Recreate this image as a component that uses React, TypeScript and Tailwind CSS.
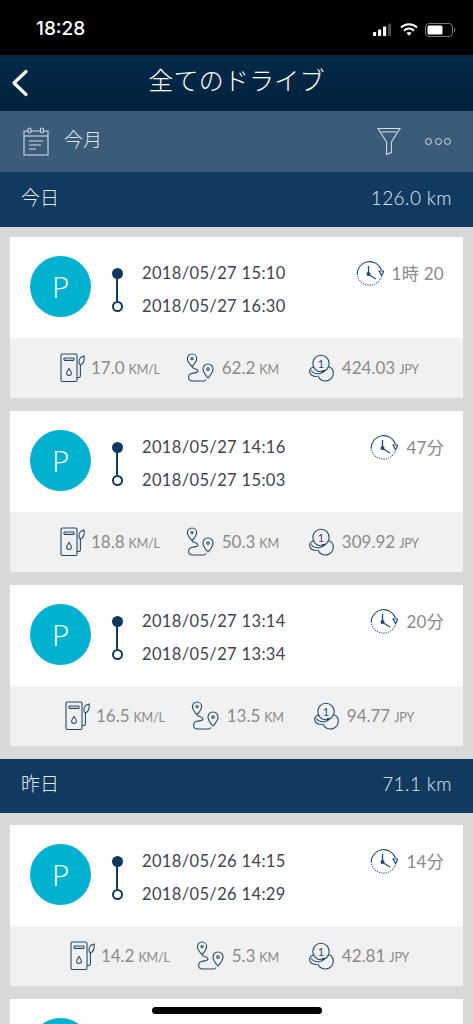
import React from "react";

const NAVY = "#1f4a70";

function Fuel() {
  return (
    <svg width="26" height="30" viewBox="0 0 26 30" fill="none" stroke={NAVY} strokeWidth="1.1" className="shrink-0">
      <rect x="1" y="1" width="16" height="27.5" rx="1.5" />
      <rect x="4" y="5" width="10" height="2.4" rx="0.6" />
      <path d="M9 15.5c-1.6 2.3-2.4 3.4-2.4 4.6a2.4 2.4 0 0 0 4.8 0c0-1.2-.8-2.3-2.4-4.6z" />
      <path d="M17 24.5h2c1 0 1.4-.8 1.4-1.8V12" />
      <path d="M20.4 12c-2-1.5-2-5 .2-7.5l3.5-1.5c.5 3.5-.3 7.6-3.7 9z" />
    </svg>
  );
}

function Route() {
  return (
    <svg width="29" height="30" viewBox="0 0 29 30" fill="none" stroke={NAVY} strokeWidth="1.1" className="shrink-0">
      <path d="M6 1a4.6 4.6 0 0 0-4.6 4.6C1.400 9 6 13.500 6 13.500S10.600 9 10.600 5.600A4.600 4.600 0 0 0 6 1z" />
      <circle cx="6" cy="5.600" r="1.100" />
      <path d="M22 11a5 5 0 0 0-5 5c0 3.600 5 9 5 9s5-5.400 5-9a5 5 0 0 0-5-5z" />
      <circle cx="22" cy="16" r="1.300" />
      <path d="M6 14.500c2.500 1 6 1.500 6 3.500s-3.500 1.500-6.500 2.500c-4 1.300-4 7.500 1 7.500h11c1.200 0 2-.6 2.500-1.500" />
    </svg>
  );
}

function Coins() {
  return (
    <svg width="25" height="28" viewBox="0 0 25 28" fill="none" stroke={NAVY} strokeWidth="1.1" className="shrink-0">
      <circle cx="12" cy="9.500" r="8.200" />
      <text x="12" y="13.500" textAnchor="middle" fontSize="11" fill={NAVY} stroke="none" style={{ fontFamily: "Lato, sans-serif" }}>1</text>
      <path d="M4.700 12.800C1.600 14 .6 16 .6 17.500c0 3 3.400 5.200 7.400 5" />
      <path d="M20.300 12.800c2.600 1.300 4 3.700 4 6.200a8 8 0 0 1-15.500 2.800" />
      <path d="M2 16.500c2 2.500 6 3.500 9 3 2.500-.4 4-1.500 5-3l-3.500.3" />
    </svg>
  );
}

function Clock() {
  return (
    <svg width="28" height="28" viewBox="0 0 28 28" fill="none" stroke={NAVY} strokeWidth="1.100" className="shrink-0">
      <path d="M1.200 14A12.500 12.500 0 0 1 25.500 10" />
      <path d="M25.900 15A12.500 12.500 0 0 1 1.200 14" strokeDasharray="1.100 1.200" />
      <path d="M23 11h5l-2.500 4.500z" />
      <path d="M12.500 6v8.500l7.500 4.500" strokeWidth="1.300" />
      <circle cx="12.500" cy="14" r="1.500" fill={NAVY} />
    </svg>
  );
}

type Trip = {
  start: string;
  end: string;
  dur: string;
  fuel: string;
  dist: string;
  cost: string;
};

function Stat({ icon, value, unit, gap }: { icon: React.ReactNode; value: string; unit: string; gap: string }) {
  return (
    <div className={`flex items-center ${gap}`}>
      {icon}
      <span className="text-[17px] text-[#8a8a8a] whitespace-nowrap flex items-baseline gap-[4px]">
        <span>{value}</span>
        <span className="text-[12.500px] tracking-[-0.2px]">{unit}</span>
      </span>
    </div>
  );
}

function Card({ t }: { t: Trip }) {
  return (
    <div className="bg-white">
      <div className="h-[101px] flex pl-5 pr-[19px] pt-[19px]">
        <div className="w-[61px] h-[61px] rounded-full bg-[#00b2d0] text-white flex items-center justify-center text-[29px] font-light shrink-0">
          P
        </div>
        <div className="w-[12px] ml-[20px] mt-[12px] flex flex-col items-center shrink-0">
          <div className="w-[11px] h-[11px] rounded-full bg-[#0f3a60] shrink-0" />
          <div className="w-[2.500px] h-[22px] bg-[#0f3a60] shrink-0" />
          <div className="w-[11px] h-[11px] rounded-full border-2 border-[#0f3a60] shrink-0" />
        </div>
        <div className="ml-[19px] flex flex-col gap-[11px] text-[16.500px] leading-[22px] text-[#3f4450] tracking-[0.35px] mt-[6px] h-fit whitespace-nowrap">
          <span>{t.start}</span>
          <span>{t.end}</span>
        </div>
        <div className="ml-auto mt-[4px] flex items-center gap-[8px] h-fit">
          <Clock />
          <span className="text-[17px] text-[#8a8a8a] tracking-[0.3px] whitespace-nowrap">{t.dur}</span>
        </div>
      </div>
      <div className="h-[60px] bg-[#f1f1f1] flex items-center justify-center pl-[6px]">
        <Stat icon={<Fuel />} value={t.fuel} unit="KM/L" gap="gap-[5px]" />
        <div className="ml-[26px]">
          <Stat icon={<Route />} value={t.dist} unit="KM" gap="gap-[7px]" />
        </div>
        <div className="ml-[30px]">
          <Stat icon={<Coins />} value={t.cost} unit="JPY" gap="gap-[8px]" />
        </div>
      </div>
    </div>
  );
}

function Section({ label, km, h }: { label: string; km: string; h: string }) {
  return (
    <div className={`${h} bg-[#103a5f] flex items-center justify-between px-[21px] text-[19px] font-light text-[#e3e9ef] shrink-0`}>
      <span className="mt-[-3px]">{label}</span>
      <span className="mt-[-3px] tracking-[0.4px]">{km}</span>
    </div>
  );
}

export default function App() {
  const today: Trip[] = [
    { start: "2018/05/27 15:10", end: "2018/05/27 16:30", dur: "1時 20", fuel: "17.0", dist: "62.2", cost: "424.03" },
    { start: "2018/05/27 14:16", end: "2018/05/27 15:03", dur: "47分", fuel: "18.8", dist: "50.3", cost: "309.92" },
    { start: "2018/05/27 13:14", end: "2018/05/27 13:34", dur: "20分", fuel: "16.5", dist: "13.5", cost: "94.77" },
  ];
  const yesterday: Trip = { start: "2018/05/26 14:15", end: "2018/05/26 14:29", dur: "14分", fuel: "14.2", dist: "5.3", cost: "42.81" };

  return (
    <div
      className="relative w-[473px] h-[1024px] overflow-hidden bg-[#d9d9d9] flex flex-col"
      style={{ fontFamily: "Lato, 'Noto Sans CJK JP', sans-serif" }}
    >
      <div className="h-[55px] bg-black text-white flex items-center justify-between pl-[36px] pr-[17px] shrink-0">
        <span className="text-[19px] font-medium mt-[3px]" style={{ fontFamily: "Inter, sans-serif" }}>18:28</span>
        <div className="flex items-center gap-[7px] mt-[4px]">
          <svg width="20" height="13" viewBox="0 0 20 13" fill="white">
            <rect x="0" y="9" width="3.200" height="4" rx="0.800" />
            <rect x="5" y="6.500" width="3.200" height="6.500" rx="0.800" />
            <rect x="10" y="3.500" width="3.200" height="9.500" rx="0.800" />
            <rect x="15" y="0.500" width="3.200" height="12.500" rx="0.800" fill="#4a4a4a" />
          </svg>
          <svg width="18" height="13" viewBox="0 0 18 13" fill="none" stroke="white" strokeWidth="2">
            <path d="M1 4.500a11.500 11.500 0 0 1 16 0" />
            <path d="M4 7.700a7 7 0 0 1 10 0" />
            <path d="M9 12.800l2.500-2.700a3.400 3.400 0 0 0-5 0z" fill="white" stroke="none" />
          </svg>
          <svg width="31" height="14" viewBox="0 0 31 14" fill="none">
            <rect x="0.500" y="0.500" width="27" height="13" rx="3.500" stroke="#777" />
            <rect x="2.500" y="2.500" width="15" height="9" rx="1.500" fill="white" />
            <path d="M29 5v4c.8-.3 1.300-1 1.300-2s-.5-1.700-1.300-2z" fill="#777" />
          </svg>
        </div>
      </div>

      <div className="h-[56px] relative bg-gradient-to-b from-[#042a49] to-[#00213d] flex items-center justify-center text-white shrink-0">
        <svg width="18" height="28" viewBox="0 0 18 28" fill="none" stroke="white" strokeWidth="3.200" strokeLinecap="round" strokeLinejoin="round" className="absolute left-[11px] top-[14px]">
          <path d="M15 2.500L3 14l12 11.500" />
        </svg>
        <span className="text-[25px] tracking-[0.2px] font-light mt-[-5px]">全てのドライブ</span>
      </div>

      <div className="h-[61px] bg-[#3a5b79] flex items-center pl-[23px] pr-[22px] text-[#e1e7ec] shrink-0">
        <svg width="26" height="29" viewBox="0 0 26 29" fill="none" stroke="#d6dde4" strokeWidth="1.100">
          <path d="M1 4h24v24H1z" />
          <path d="M1 9h24" />
          <rect x="5" y="1" width="3" height="5" rx="1.500" fill="#3a5b79" />
          <rect x="17.500" y="1" width="3" height="5" rx="1.500" fill="#3a5b79" />
          <path d="M6 14h14M6 18h12M6 22h7" />
        </svg>
        <span className="ml-[15px] text-[19px] font-light mt-[-2px]">今月</span>
        <svg width="24" height="29" viewBox="0 0 25 29" fill="none" stroke="#d6dde4" strokeWidth="1.100" className="ml-auto">
          <path d="M1 1h23L15 15v11l-5 2V15z" />
          <path d="M4.500 4.500h16" />
        </svg>
        <div className="flex gap-[2.500px] ml-[24px]">
          <div className="w-[7px] h-[7px] rounded-full border border-[#d6dde4]" />
          <div className="w-[7px] h-[7px] rounded-full border border-[#d6dde4]" />
          <div className="w-[7px] h-[7px] rounded-full border border-[#d6dde4]" />
        </div>
      </div>

      <Section label="今日" km="126.0 km" h="h-[55px]" />

      <div className="px-[10px] pt-[10px] pb-[13px] flex flex-col gap-[13px] shrink-0">
        {today.map((t) => (
          <Card key={t.start} t={t} />
        ))}
      </div>

      <Section label="昨日" km="71.1 km" h="h-[54px]" />

      <div className="px-[10px] pt-[12px] flex flex-col gap-[13px] shrink-0">
        <Card t={yesterday} />
        <div className="bg-white h-[161px] flex pl-5 pt-[19px]">
          <div className="w-[61px] h-[61px] rounded-full bg-[#00b2d0] shrink-0" />
        </div>
      </div>

      <div className="absolute left-[152px] top-[1007px] w-[170px] h-[7px] rounded-full bg-black" />
    </div>
  );
}
